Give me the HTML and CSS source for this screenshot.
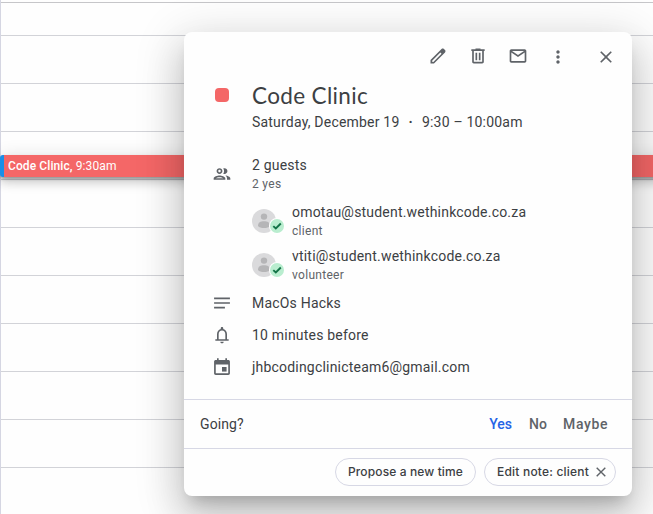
FILE: index.html
```html
<!DOCTYPE html>
<html lang="en">
<head>
<meta charset="utf-8">
<title>Calendar</title>
<link rel="stylesheet" href="styles.css">
</head>
<body>
<div class="calendar">
  <div class="slot slot-first"></div>
  <div class="slot slot-second"></div>
  <div class="slot"></div><div class="slot"></div><div class="slot"></div>
  <div class="slot"></div><div class="slot"></div><div class="slot"></div>
  <div class="slot"></div><div class="slot"></div><div class="slot"></div>
  <div class="event"><span><b>Code Clinic,</b> 9:30am</span></div>
</div>
<section class="card">
  <div class="toolbar">
    <svg class="icon" viewBox="0 0 24 24"><path d="M20.410 4.940l-1.350-1.350c-.78-.78-2.050-.78-2.830 0L3 16.820V21h4.180L20.410 7.770c.79-.78.79-2.050 0-2.830zM6.410 19.060L5 19v-1.360l9.820-9.820 1.410 1.410-9.820 9.830z"/></svg>
    <svg class="icon" viewBox="0 0 24 24"><path d="M15 4V3H9v1H4v2h1v13c0 1.100.9 2 2 2h10c1.100 0 2-.9 2-2V6h1V4h-5zm2 15H7V6h10v13z"/><path d="M9 8h2v9H9zm4 0h2v9h-2z"/></svg>
    <svg class="icon" viewBox="0 0 24 24"><path d="M20 4H4c-1.100 0-2 .9-2 2v12c0 1.100.9 2 2 2h16c1.100 0 2-.9 2-2V6c0-1.100-.9-2-2-2zm-.8 2L12 10.800 4.800 6h14.400zM4 18V7.870l8 5.330 8-5.330V18H4z"/></svg>
    <svg class="icon more" viewBox="0 0 24 24"><path d="M12 8c1.100 0 2-.9 2-2s-.9-2-2-2-2 .9-2 2 .9 2 2 2zm0 2c-1.100 0-2 .9-2 2s.9 2 2 2 2-.9 2-2-.9-2-2-2zm0 6c-1.100 0-2 .9-2 2s.9 2 2 2 2-.9 2-2-.9-2-2-2z"/></svg>
    <svg class="icon close" viewBox="0 0 24 24"><path d="M19 6.410L17.590 5 12 10.590 6.410 5 5 6.410 10.590 12 5 17.590 6.410 19 12 13.410 17.590 19 19 17.590 13.410 12z"/></svg>
  </div>
  <div class="details">
    <div class="row heading">
      <span class="swatch"></span>
      <div>
        <h1>Code Clinic</h1>
        <p class="text when"><span class="date">Saturday, December 19</span><span class="dot">·</span><span class="time">9:30 – 10:00am</span></p>
      </div>
    </div>
    <div class="row guests">
      <svg class="icon" viewBox="0 0 24 24"><path d="M9 13.750c-2.340 0-7 1.170-7 3.500V19h14v-1.750c0-2.330-4.660-3.500-7-3.500zM4.340 17c.84-.58 2.870-1.250 4.660-1.250s3.820.67 4.660 1.250H4.340zM9 12c1.930 0 3.500-1.570 3.500-3.500S10.930 5 9 5 5.500 6.570 5.500 8.500 7.070 12 9 12zm0-5c.83 0 1.500.67 1.500 1.500S9.830 10 9 10s-1.500-.67-1.500-1.500S8.170 7 9 7zm7.040 6.810c1.160.84 1.960 1.960 1.960 3.440V19h4v-1.750c0-2.020-3.500-3.170-5.960-3.440zM15 12c1.930 0 3.500-1.570 3.500-3.500S16.930 5 15 5c-.54 0-1.040.13-1.500.35.63.89 1 1.980 1 3.150s-.37 2.260-1 3.150c.46.22.96.35 1.500.35z"/></svg>
      <div><p class="text">2 guests</p><p class="sub">2 yes</p></div>
    </div>
    <div class="guest">
      <svg class="avatar" viewBox="0 0 32 26"><circle cx="12" cy="12" r="12" fill="#dadadc"/><circle cx="12" cy="7.600" r="3.200" fill="#b5b5b7"/><path d="M6 17c0-3.700 2.500-4.700 6-4.700s6 1 6 4.700c-2 2.700-10 2.700-12 0z" fill="#b5b5b7"/><circle cx="25" cy="17" r="8" fill="#fff"/><circle cx="25" cy="17" r="7" fill="#b9edcf"/><path d="M21.300 17.100l2.500 2.400 5-5" fill="none" stroke="#137347" stroke-width="1.900"/></svg>
      <div><p class="text">omotau@student.wethinkcode.co.za</p><p class="sub">client</p></div>
    </div>
    <div class="guest">
      <svg class="avatar" viewBox="0 0 32 26"><circle cx="12" cy="12" r="12" fill="#dadadc"/><circle cx="12" cy="7.600" r="3.200" fill="#b5b5b7"/><path d="M6 17c0-3.700 2.500-4.700 6-4.700s6 1 6 4.700c-2 2.700-10 2.700-12 0z" fill="#b5b5b7"/><circle cx="25" cy="17" r="8" fill="#fff"/><circle cx="25" cy="17" r="7" fill="#b9edcf"/><path d="M21.300 17.100l2.500 2.400 5-5" fill="none" stroke="#137347" stroke-width="1.900"/></svg>
      <div><p class="text">vtiti@student.wethinkcode.co.za</p><p class="sub">volunteer</p></div>
    </div>
    <div class="row info">
      <svg class="icon" viewBox="0 0 24 24"><path d="M2.500 5.500h19v2h-19zm0 5.500h19v2h-19zm0 5.500h13v2h-13z"/></svg>
      <p class="text">MacOs Hacks</p>
    </div>
    <div class="row info">
      <svg class="icon" viewBox="0 0 24 24"><path d="M18 17v-6c0-3.070-1.630-5.640-4.500-6.320V4c0-.83-.67-1.500-1.500-1.500s-1.500.67-1.500 1.500v.68C7.640 5.360 6 7.920 6 11v6H4v2h16v-2h-2zm-2 0H8v-6c0-2.480 1.510-4.500 4-4.500s4 2.020 4 4.500v6zm-4 5c1.100 0 2-.9 2-2h-4c0 1.100.9 2 2 2z"/></svg>
      <p class="text">10 minutes before</p>
    </div>
    <div class="row info">
      <svg class="icon" viewBox="0 0 24 24"><path fill-rule="evenodd" d="M19.500 3.500H18V1.500h-2v2H8v-2H6v2H4.500c-1.200 0-2 .8-2 2v14c0 1.200.8 2 2 2h15c1.200 0 2-.8 2-2v-14c0-1.200-.8-2-2-2zm0 16h-15V9h15z"/><path d="M12 12h5.500v5.500H12z"/></svg>
      <p class="text">jhbcodingclinicteam6@gmail.com</p>
    </div>
  </div>
  <div class="going">
    <span class="question">Going?</span>
    <span class="answer yes">Yes</span><span class="answer no">No</span><span class="answer maybe">Maybe</span>
  </div>
  <div class="actions">
    <button class="chip propose">Propose a new time</button>
    <button class="chip note"><span>Edit note: client</span><svg viewBox="0 0 10 10"><path d="M.7.7l8.600 8.600M9.300.7L.7 9.300" stroke="#5f6368" stroke-width="1.400"/></svg></button>
  </div>
</section>
</body>
</html>
```
FILE: styles.css
```css
* { box-sizing: border-box; }
body {
  margin: 0;
  width: 653px;
  height: 514px;
  overflow: hidden;
  position: relative;
  background: #fefefe;
  color: #3c4043;
  font-family: Roboto, "Liberation Sans", sans-serif;
}
h1, p { margin: 0; font-weight: 400; }
.calendar { height: 514px; border-left: 1px solid #d5d6e2; }
.slot { height: 48px; border-bottom: 1px solid #d2d3d8; }
.slot-first { height: 3px; border-color: #c6c6c9; }
.slot-second { height: 33px; }
.event {
  position: absolute;
  left: 0;
  top: 155px;
  width: 670px;
  height: 22px;
  padding-left: 4px;
  border-left: 4px solid #1a8fe8;
  border-radius: 3px;
  background: #f46767;
  color: #fff;
  font-size: 12px;
  line-height: 22px;
  letter-spacing: .1px;
  box-shadow: 0 2px 3px rgba(0,0,0,.28), 0 6px 10px rgba(0,0,0,.14), 0 1px 18px rgba(0,0,0,.12);
}
.event b { font-weight: 500; }
.card {
  position: absolute;
  left: 184px;
  top: 32px;
  width: 448px;
  height: 464px;
  border-radius: 8px;
  background: #fefefe;
  box-shadow: 0 24px 38px 3px rgba(0,0,0,.14), 0 9px 46px 8px rgba(0,0,0,.12), 0 11px 15px -7px rgba(0,0,0,.2);
}
.toolbar { display: flex; justify-content: flex-end; gap: 20px; padding: 14px 16px 0 0; height: 46px; }
.icon { width: 20px; height: 20px; fill: #5f6368; flex: none; }
.toolbar .more { margin-top: 1px; }
.toolbar .close { margin: 1px 0 0 8px; }
.details { height: 321px; padding-left: 28px; }
.row { display: flex; gap: 20px; }
.text { font-size: 14px; line-height: 20px; letter-spacing: .2px; white-space: nowrap; }
.sub { font-size: 12px; line-height: 16px; letter-spacing: .3px; color: #5f6368; padding-top: 1px; }
.heading { height: 76px; }
.swatch { width: 14px; height: 14px; margin: 10px 3px; border-radius: 4px; background: #f46767; }
h1 { font-family: Lato, sans-serif; font-size: 22.5px; line-height: 28px; margin-top: 4px; letter-spacing: .35px; }
.when { margin-top: 2px; }
.dot { display: inline-block; width: 22.5px; text-align: center; font-weight: 700; }
.guests { height: 48px; }
.guests .icon { margin-top: 10px; }
.guests > div { padding-top: 1px; }
.guest { display: flex; gap: 8px; height: 44px; margin-left: 40px; }
.avatar { width: 32px; height: 26px; margin-top: 7px; }
.info { height: 32px; align-items: flex-start; padding-top: 3px; }
.going {
  display: flex;
  align-items: center;
  height: 50px;
  padding: 0 24px 0 16px;
  border: solid #d7d8e5;
  border-width: 1px 0;
  font-size: 14px;
  letter-spacing: .1px;
}
.question { margin-right: auto; }
.answer { margin-left: 16px; font-weight: 500; color: #5f6368; }
.maybe { letter-spacing: .6px; }
.yes { color: #2463e6; letter-spacing: 0; margin-right: 1px; }
.actions { display: flex; justify-content: flex-end; gap: 8px; padding: 9px 16px 0; }
.chip {
  display: flex;
  align-items: center;
  justify-content: center;
  height: 28px;
  padding: 0 0 1px;
  border: 1px solid #d7d8e5;
  border-radius: 14px;
  background: transparent;
  color: #3c4043;
  font: 500 12px Inter, sans-serif;
  letter-spacing: .12px;
}
.propose { width: 141px; }
.note { width: 132px; justify-content: flex-start; padding-left: 12px; gap: 7px; }
.note span { letter-spacing: .2px; }
.note svg { width: 10px; height: 10px; }
```
